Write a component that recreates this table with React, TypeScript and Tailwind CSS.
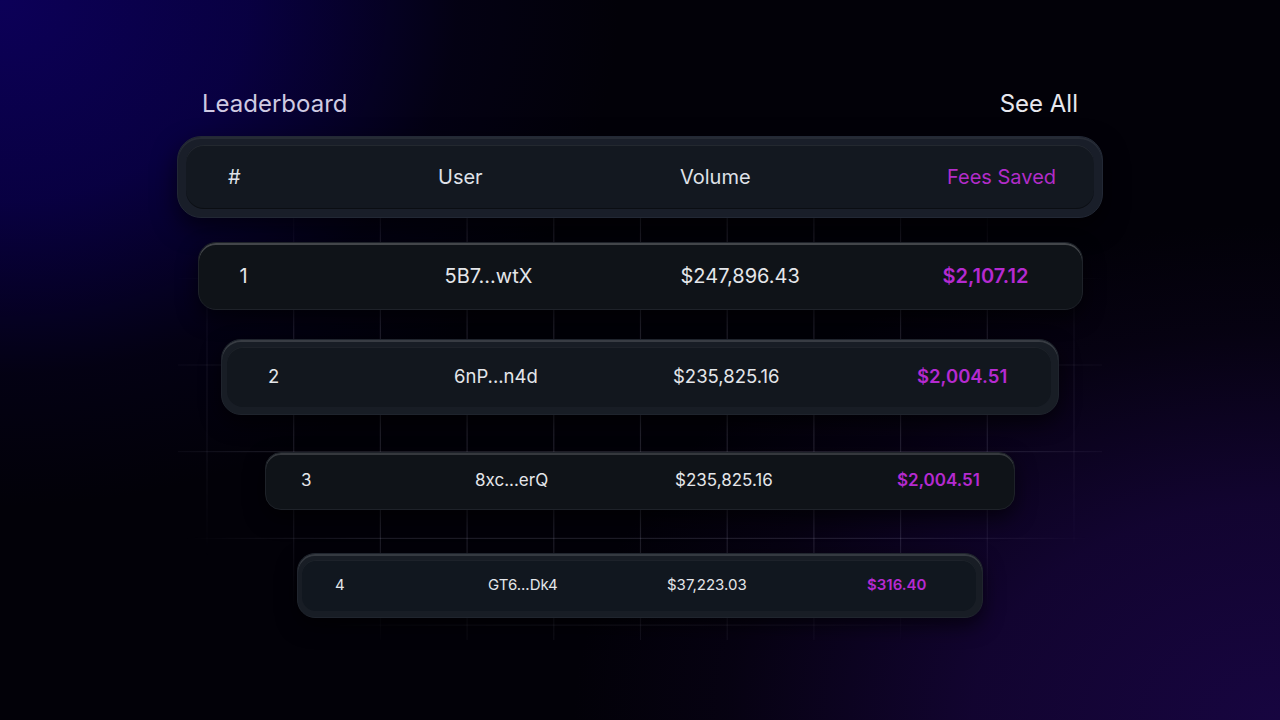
import React from 'react'

type Row = {
    rank: string
    user: string
    volume: string
    fees: string
}

const rows: Row[] = [
    { rank: '1', user: '5B7...wtX', volume: '$247,896.43', fees: '$2,107.12' },
    { rank: '2', user: '6nP...n4d', volume: '$235,825.16', fees: '$2,004.51' },
    { rank: '3', user: '8xc...erQ', volume: '$235,825.16', fees: '$2,004.51' },
    { rank: '4', user: 'GT6...Dk4', volume: '$37,223.03', fees: '$316.40' },
]

function GridLines() {
    const xs = Array.from({ length: 11 }, (_, i) => 207 + i * 86.7)
    const ys = [191.6, 278.3, 365, 451.7, 538.4, 625.1]
    return (
        <svg
            className="pointer-events-none absolute left-0 top-0"
            width="1280"
            height="720"
            viewBox="0 0 1280 720"
        >
            <defs>
                <radialGradient id="gridFade" cx="640" cy="400" r="520" gradientUnits="userSpaceOnUse" gradientTransform="translate(640 400) scale(1 0.55) translate(-640 -400)">
                    <stop offset="0%" stopColor="#fff" stopOpacity="1" />
                    <stop offset="70%" stopColor="#fff" stopOpacity="0.8" />
                    <stop offset="100%" stopColor="#fff" stopOpacity="0" />
                </radialGradient>
                <mask id="gridMask">
                    <rect x="0" y="0" width="1280" height="720" fill="url(#gridFade)" />
                </mask>
            </defs>
            <g mask="url(#gridMask)" stroke="rgba(200,200,230,0.17)" strokeWidth="1.2">
                {xs.map((x) => (
                    <line key={x} x1={x} y1={170} x2={x} y2={640} />
                ))}
                {ys.map((y) => (
                    <line key={y} x1={178} y1={y} x2={1102} y2={y} />
                ))}
            </g>
        </svg>
    )
}

export default function App() {
    return (
        <main
            className="relative min-h-screen w-full overflow-hidden bg-[radial-gradient(ellipse_55%_80%_at_0%_0%,#0c0058_0%,rgba(10,0,80,0.8)_35%,rgba(6,0,40,0.35)_65%,transparent_88%),radial-gradient(ellipse_60%_75%_at_100%_100%,#170540_0%,rgba(22,5,58,0.8)_40%,rgba(16,4,40,0.3)_72%,transparent_92%),linear-gradient(#020108,#020108)] font-['Inter',sans-serif]"
        >
            <GridLines />

            <div className="relative mx-auto w-[926px] pt-[89px]">
                {/* Title */}
                <div className="flex h-[30px] items-center justify-between px-[25px]">
                    <h2 className="text-[24px] font-normal leading-none text-[#cfcae2]">Leaderboard</h2>
                    <span className="text-[24px] font-normal leading-none text-[#e8e8ee]">See All</span>
                </div>

                {/* Header */}
                <div className="mt-[17px] h-[82px] rounded-[24px] border border-[#222835] bg-[#191e29] p-[8px] shadow-[inset_0_2px_0_rgba(255,255,255,0.06),0_10px_24px_rgba(0,0,0,0.6)]">
                    <div className="grid h-full grid-cols-[210px_242px_267px_1fr] items-center rounded-[18px] bg-[#131820] pl-[42px] text-[20px] text-[#dfe1e8] shadow-[inset_0_1px_0_rgba(255,255,255,0.07),inset_0_-1px_0_rgba(0,0,0,0.4)]">
                        <span>#</span>
                        <span>User</span>
                        <span>Volume</span>
                        <span className="text-[#b22cc9]">Fees Saved</span>
                    </div>
                </div>

                {/* Row 1 */}
                <div className="mx-auto mt-[24px] grid h-[68px] w-[885px] grid-cols-[205px_236px_262px_1fr] items-center rounded-[18px] border border-[#1e2229] bg-[#0f1318] pl-[41px] text-[20px] text-[#e4e6ea] shadow-[inset_0_2px_0_rgba(255,255,255,0.22),0_8px_20px_rgba(0,0,0,0.6)]">
                    <span>{rows[0].rank}</span>
                    <span>{rows[0].user}</span>
                    <span>{rows[0].volume}</span>
                    <span className="font-semibold text-[#b52ad0]">{rows[0].fees}</span>
                </div>

                {/* Row 2 */}
                <div className="mx-auto mt-[29px] h-[76px] w-[838px] rounded-[20px] border border-[#1f242d] bg-[#181d25] pb-[7px] pl-[5px] pr-[7px] pt-[7px] shadow-[inset_0_2px_0_rgba(255,255,255,0.14),0_8px_20px_rgba(0,0,0,0.6)]">
                    <div className="grid h-full grid-cols-[186px_219px_244px_1fr] items-center rounded-[16px] bg-[#12171e] pl-[41px] text-[18.5px] text-[#e4e6ea] shadow-[inset_0_1px_0_rgba(255,255,255,0.05)]">
                        <span>{rows[1].rank}</span>
                        <span>{rows[1].user}</span>
                        <span>{rows[1].volume}</span>
                        <span className="font-semibold text-[#b52ad0]">{rows[1].fees}</span>
                    </div>
                </div>

                {/* Row 3 */}
                <div className="mx-auto mt-[37px] grid h-[58px] w-[750px] grid-cols-[174px_200px_222px_1fr] items-center rounded-[16px] border border-[#1e2229] bg-[#0f1318] pl-[35px] text-[17px] text-[#e4e6ea] shadow-[inset_0_2px_0_rgba(255,255,255,0.16),0_8px_20px_rgba(0,0,0,0.6)]">
                    <span>{rows[2].rank}</span>
                    <span>{rows[2].user}</span>
                    <span>{rows[2].volume}</span>
                    <span className="font-semibold text-[#b52ad0]">{rows[2].fees}</span>
                </div>

                {/* Row 4 */}
                <div className="mx-auto mt-[43px] h-[65px] w-[686px] rounded-[18px] border border-[#20252e] bg-[#181d25] pb-[6px] pl-[4px] pr-[6px] pt-[6px] shadow-[inset_0_2px_0_rgba(255,255,255,0.13),0_8px_20px_rgba(0,0,0,0.6)]">
                    <div className="grid h-full grid-cols-[153px_179px_200px_1fr] items-center rounded-[14px] bg-[#11171f] pl-[33px] text-[15px] text-[#e4e6ea] shadow-[inset_0_1px_0_rgba(255,255,255,0.05)]">
                        <span>{rows[3].rank}</span>
                        <span>{rows[3].user}</span>
                        <span>{rows[3].volume}</span>
                        <span className="font-semibold text-[#b52ad0]">{rows[3].fees}</span>
                    </div>
                </div>
            </div>
        </main>
    )
}
